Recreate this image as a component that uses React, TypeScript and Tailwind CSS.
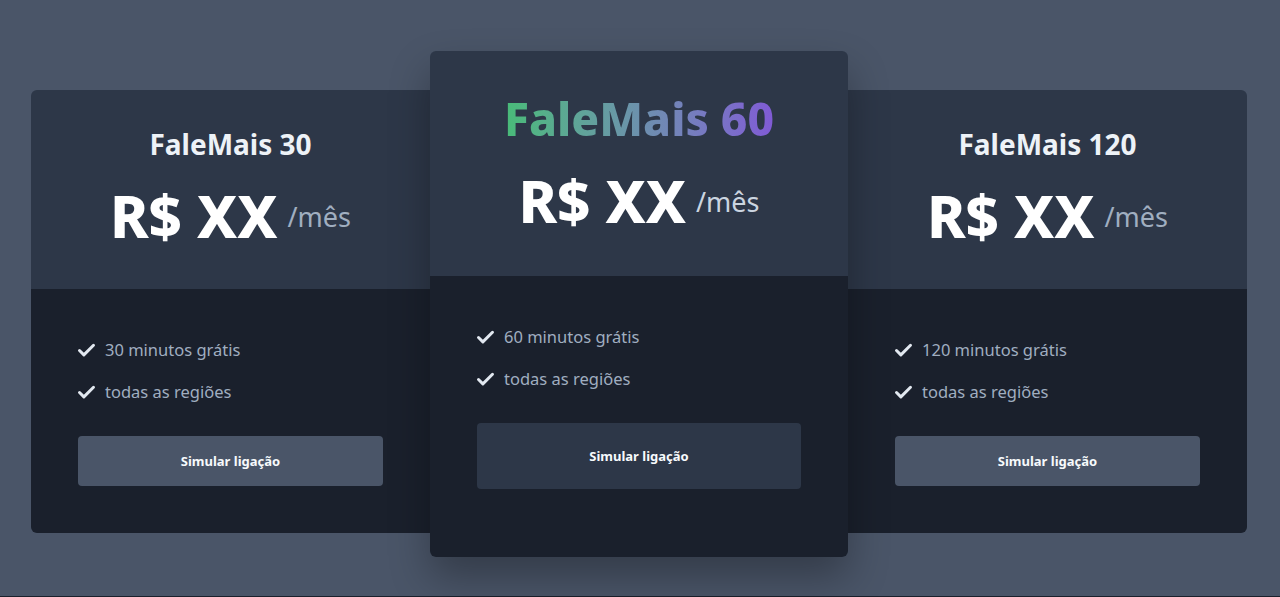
import React from "react";

const font = { fontFamily: '"Noto Sans", "Open Sans", sans-serif' };

function CheckIcon() {
  return (
    <svg width="21" height="21" viewBox="0 0 24 24" fill="none" stroke="#e2e8f0" strokeWidth="3.4" strokeLinecap="round" strokeLinejoin="round" className="-ml-[2px]">
      <polyline points="20 6 9 17 4 12" />
    </svg>
  );
}

function Features({ mins }: { mins: string }) {
  return (
    <ul className="flex flex-col gap-[20px]">
      <li className="flex items-center gap-[8px] text-[16.5px] leading-[22px] text-[#a0aec0]">
        <CheckIcon />
        <span>{mins} minutos grátis</span>
      </li>
      <li className="flex items-center gap-[8px] text-[16.5px] leading-[22px] text-[#a0aec0]">
        <CheckIcon />
        <span>todas as regiões</span>
      </li>
    </ul>
  );
}

function SideCard({ title, mins, side }: { title: string; mins: string; side: "l" | "r" }) {
  return (
    <div
      className={`w-[399px] mt-[39px] flex flex-col overflow-hidden ${side === "l" ? "rounded-l-[6px]" : "rounded-r-[6px]"}`}
    >
      <div className="h-[199px] bg-[#2d3748] flex flex-col items-center pt-[37px]">
        <h2 className="text-[28px] leading-[35px] font-bold text-[#edf2f7]">{title}</h2>
        <div className="flex items-center mt-[21px]">
          <span className="text-[58px] leading-[66px] font-extrabold text-white">R$ XX</span>
          <span className="ml-[10px] text-[27px] leading-[34px] text-[#a0aec0] mt-[2px]">/mês</span>
        </div>
      </div>
      <div className="h-[244px] bg-[#1a202c] px-[47px] pt-[50px]">
        <Features mins={mins} />
        <button className="mt-[33px] w-full h-[50px] rounded-[4px] bg-[#4a5568] text-[13px] font-bold text-[#f7fafc] pt-[2px]">
          Simular ligação
        </button>
      </div>
    </div>
  );
}

function MiddleCard() {
  return (
    <div className="relative z-10 w-[418px] flex flex-col overflow-hidden rounded-[6px] shadow-[0_20px_40px_rgba(0,0,0,0.3)]">
      <div className="h-[225px] bg-[#2d3748] flex flex-col items-center pt-[39px]">
        <h2 className="text-[46px] leading-[56px] font-extrabold bg-gradient-to-r from-[#48bb78] to-[#805ad5] bg-clip-text text-transparent">
          FaleMais 60
        </h2>
        <div className="flex items-center mt-[22px]">
          <span className="text-[58px] leading-[66px] font-extrabold text-white">R$ XX</span>
          <span className="ml-[10px] text-[27px] leading-[34px] text-[#cbd5e0] mt-[2px]">/mês</span>
        </div>
      </div>
      <div className="h-[281px] bg-[#1a202c] px-[47px] pt-[50px]">
        <Features mins="60" />
        <button className="mt-[33px] w-full h-[66px] rounded-[4px] bg-[#2d3748] text-[13px] font-bold text-[#f7fafc] pt-[2px]">
          Simular ligação
        </button>
      </div>
    </div>
  );
}

export default function App() {
  return (
    <div style={font} className="bg-[#1a202c]">
      <div className="h-[596px] bg-[#4a5568] flex justify-center items-start pt-[51px] pr-[2px]">
        <SideCard title="FaleMais 30" mins="30" side="l" />
        <MiddleCard />
        <SideCard title="FaleMais 120" mins="120" side="r" />
      </div>
      <div className="h-[1px]" />
    </div>
  );
}
